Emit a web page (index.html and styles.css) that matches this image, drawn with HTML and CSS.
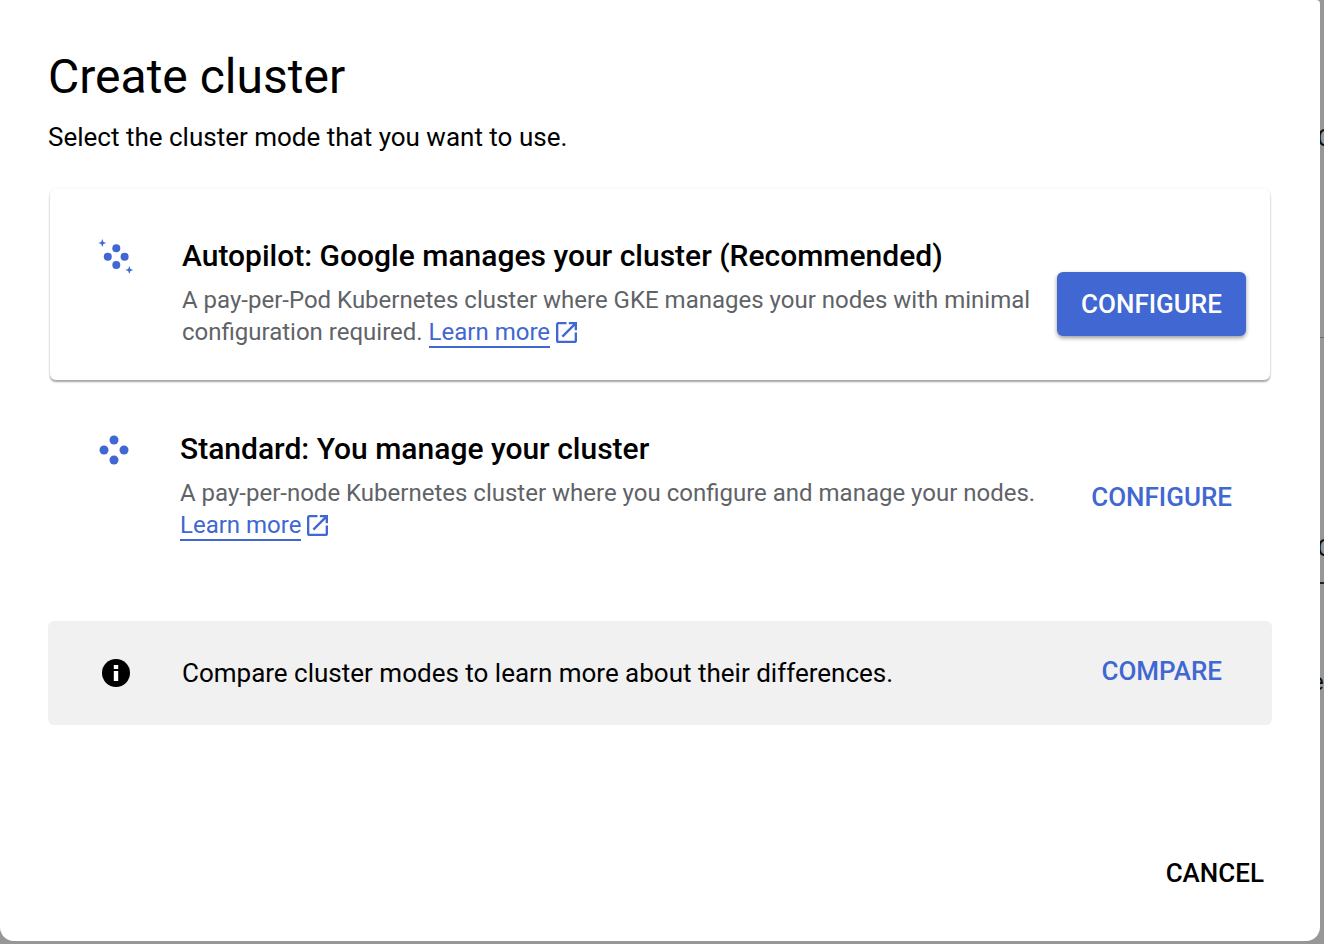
FILE: index.html
```html
<!DOCTYPE html>
<html lang="en">
<head>
<meta charset="utf-8">
<title>Create cluster</title>
<link rel="stylesheet" href="styles.css">
</head>
<body>
<div class="backdrop" aria-hidden="true">
  <span class="peek peek-a">C</span>
  <span class="peek-line peek-line-a"></span>
  <span class="peek peek-b">C</span>
  <span class="peek-line peek-line-b"></span>
  <span class="peek peek-c">e</span>
</div>
<main class="dialog">
  <h1 class="title">Create cluster</h1>
  <p class="subtitle">Select the cluster mode that you want to use.</p>

  <section class="mode mode-card">
    <div class="mode-icon">
      <svg width="38" height="38" viewBox="0 0 38 38">
        <g fill="#4067d2">
          <circle cx="18.3" cy="10.3" r="4"/><circle cx="9.8" cy="18.7" r="4"/>
          <circle cx="26.6" cy="18.7" r="4"/><circle cx="18.3" cy="27" r="4"/>
          <path d="M4.3 1 L5.4 3.9 L8.3 5 L5.4 6.1 L4.3 9 L3.2 6.1 L0.3 5 L3.2 3.9 Z"/>
          <path d="M31.3 28 L32.4 30.9 L35.3 32 L32.4 33.1 L31.3 36 L30.2 33.1 L27.3 32 L30.2 30.9 Z"/>
        </g>
      </svg>
    </div>
    <div class="mode-body">
      <h2 class="mode-title">Autopilot: Google manages your cluster (Recommended)</h2>
      <p class="mode-desc">A pay-per-Pod Kubernetes cluster where GKE manages your nodes with minimal configuration required. <a class="learn" href="#">Learn more</a><svg class="ext" width="21" height="21" viewBox="3 3 18 18"><path fill="#4067d2" d="M19 19H5V5h7V3H5c-1.11 0-2 .9-2 2v14c0 1.1.89 2 2 2h14c1.1 0 2-.9 2-2v-7h-2v7zM14 3v2h3.59l-9.83 9.83 1.41 1.41L19 6.41V10h2V3h-7z"/></svg></p>
    </div>
    <button class="btn btn-raised">CONFIGURE</button>
  </section>

  <section class="mode mode-plain">
    <div class="mode-icon">
      <svg width="32" height="32" viewBox="0 0 32 32">
        <g fill="#4067d2">
          <circle cx="16" cy="6" r="4.5"/><circle cx="6" cy="16" r="4.5"/>
          <circle cx="26" cy="16" r="4.5"/><circle cx="16" cy="26" r="4.5"/>
        </g>
      </svg>
    </div>
    <div class="mode-body">
      <h2 class="mode-title">Standard: You manage your cluster</h2>
      <p class="mode-desc">A pay-per-node Kubernetes cluster where you configure and manage your nodes.<br><a class="learn" href="#">Learn more</a><svg class="ext" width="21" height="21" viewBox="3 3 18 18"><path fill="#4067d2" d="M19 19H5V5h7V3H5c-1.11 0-2 .9-2 2v14c0 1.1.89 2 2 2h14c1.1 0 2-.9 2-2v-7h-2v7zM14 3v2h3.59l-9.83 9.83 1.41 1.41L19 6.41V10h2V3h-7z"/></svg></p>
    </div>
    <button class="btn btn-text">CONFIGURE</button>
  </section>

  <section class="banner">
    <svg class="info" width="28" height="28" viewBox="0 0 28 28">
      <circle cx="14" cy="14" r="14" fill="#000"/>
      <rect x="11.8" y="6" width="4.4" height="4" fill="#fff"/>
      <rect x="11.8" y="12" width="4.4" height="10" fill="#fff"/>
    </svg>
    <p class="banner-text">Compare cluster modes to learn more about their differences.</p>
    <button class="btn btn-text btn-compare">COMPARE</button>
  </section>

  <footer class="actions">
    <button class="btn btn-cancel">CANCEL</button>
  </footer>
</main>
</body>
</html>
```

FILE: styles.css
```css
* { box-sizing: border-box; }
html, body { margin: 0; height: 100%; }
body {
  width: 1324px;
  height: 944px;
  overflow: hidden;
  position: relative;
  background: #979797;
  font-family: Roboto, "Liberation Sans", sans-serif;
  color: #000;
}
.backdrop { position: absolute; inset: 0; }
.peek { position: absolute; left: 1317px; font-size: 24px; line-height: 28px; color: #0c0c0c; }
.peek-a { top: 124px; }
.peek-b { top: 534px; }
.peek-c { top: 668px; left: 1311px; }
.peek-line { position: absolute; left: 1320px; width: 4px; height: 1px; background: #6c6c6c; }
.peek-line-a { top: 337px; }
.peek-line-b { top: 582px; height: 2px; background: #222; }
.dialog {
  position: relative;
  width: 1320px;
  height: 941px;
  background: #fff;
  border-radius: 0 4px 14px 14px;
  padding: 49px 48px 0 48px;
  display: flex;
  flex-direction: column;
}
.title { margin: 0; font-size: 48px; line-height: 56px; font-weight: 400; }
.subtitle { margin: 16px 0 0; font-size: 26px; line-height: 32px; }
.mode { display: flex; align-items: flex-start; }
.mode-card {
  margin: 36px 2px 0;
  height: 191px;
  padding: 49px 24px 0 48px;
  background: #fff;
  border-radius: 6px;
  box-shadow: 0 2px 2px rgba(0,0,0,.35), 0 0 3px rgba(0,0,0,.06);
}
.mode-plain { height: 241px; padding: 51px 40px 0 50px; }
.mode-icon { flex: none; width: 84px; }
.mode-plain .mode-icon { width: 82px; padding-top: 3px; }
.mode-body { flex: 1; min-width: 0; }
.mode-title { margin: 0; font-size: 30px; line-height: 36px; font-weight: 500; }
.mode-desc { margin: 10px 0 0; font-size: 24px; line-height: 32px; color: #5f6368; }
.learn { color: #4067d2; text-decoration: none; border-bottom: 2px solid #4067d2; }
.ext { vertical-align: -3px; margin-left: 6px; }
.btn {
  flex: none;
  border: 0;
  background: none;
  font: 500 26px/32px Roboto, "Liberation Sans", sans-serif;
  padding: 0;
  cursor: pointer;
}
.btn-raised {
  width: 189px;
  height: 64px;
  margin: 34px 0 0 20px;
  background: #4067d2;
  color: #fff;
  border-radius: 6px;
  box-shadow: 0 2px 4px rgba(0,0,0,.4);
}
.btn-text { color: #4067d2; }
.mode-plain .btn-text { margin: 50px 0 0 40px; }
.banner {
  display: flex;
  align-items: center;
  height: 104px;
  background: #f1f1f1;
  border-radius: 6px;
  padding: 0 50px 0 54px;
}
.info { flex: none; margin-right: 52px; }
.banner-text { flex: 1; margin: 0; font-size: 26px; line-height: 32px; }
.btn-compare { margin-top: -4px; }
.actions { display: flex; justify-content: flex-end; margin: 132px 8px 0 0; }
.btn-cancel { color: #000; }
```
